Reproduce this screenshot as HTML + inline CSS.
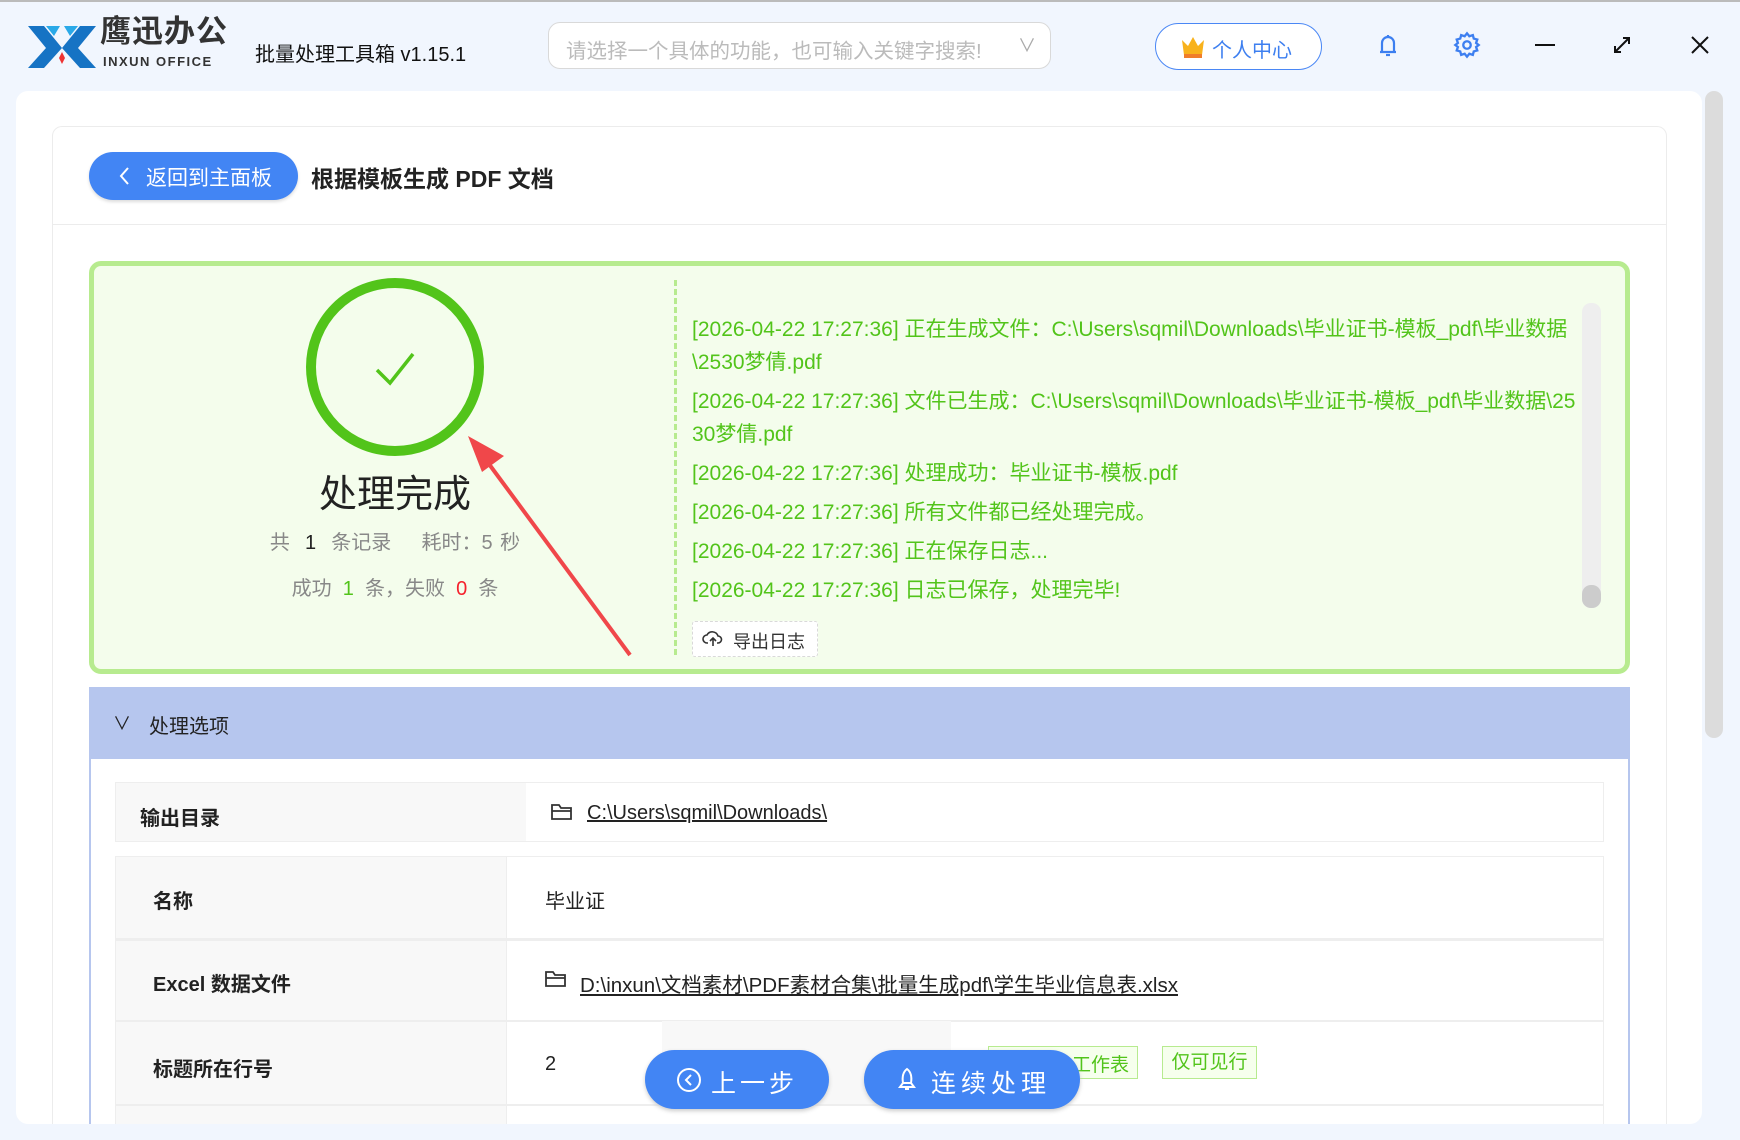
<!DOCTYPE html>
<html><head><meta charset="utf-8"><style>
*{box-sizing:border-box;margin:0;padding:0}
body{width:1740px;height:1140px;background:#f1f6fe;font-family:"Liberation Sans","Noto Sans CJK SC",sans-serif;position:relative;overflow:hidden;color:#222}
.a{position:absolute}
.log{position:absolute;left:692px;color:#52c41a;font-size:21px;white-space:nowrap}
.lab{position:absolute;font-weight:bold;font-size:20px;color:#222}
</style></head><body>
<div class="a" style="left:0;top:0;width:1740px;height:2px;background:#bbb"></div>
<svg class="a" style="left:28px;top:22px" width="68" height="46" viewBox="0 0 68 46">
<path d="M0 4h16l18 22-18 20H0l18-20z" fill="#1673c4"/>
<path d="M68 4H52L34 26l18 20h16L50 26z" fill="#1673c4"/>
<path d="M18 4h14l-6 10z" fill="#2aa9e8"/><path d="M50 4H36l6 10z" fill="#2aa9e8"/>
<path d="M34 30l3 6-3 6-3-6z" fill="#e33"/>
</svg>
<div class="a" style="left:100px;top:14px;font-size:31px;line-height:36px;font-weight:bold;color:#333;letter-spacing:1px">鹰迅办公</div>
<div class="a" style="left:103px;top:55px;font-size:13px;line-height:14px;font-weight:bold;color:#333;letter-spacing:1.5px">INXUN OFFICE</div>
<div class="a" style="left:255px;top:38px;font-size:20px;color:#111">批量处理工具箱 v1.15.1</div>
<div class="a" style="left:548px;top:22px;width:503px;height:47px;border:1px solid #d9d9d9;border-radius:12px;background:#fff"></div>
<div class="a" style="left:566px;top:34px;font-size:20.5px;color:#bbb">请选择一个具体的功能，也可输入关键字搜索!</div>
<div class="a" style="left:1018px;top:32px;font-size:18px;color:#aaa">∨</div>
<div class="a" style="left:1155px;top:23px;width:167px;height:47px;border:1px solid #4a87f5;border-radius:24px;background:#fff"></div>
<svg class="a" style="left:1180px;top:34px" width="26" height="26" viewBox="0 0 26 26"><path d="M2 6l6 6 5-9 5 9 6-6-2 15H4z" fill="#f8b21c"/><rect x="4" y="20" width="18" height="4" fill="#f07d2a"/></svg>
<div class="a" style="left:1212px;top:34px;font-size:20px;color:#3d7ff0">个人中心</div>
<svg class="a" style="left:1376px;top:32px" width="24" height="28" viewBox="0 0 24 28" fill="none" stroke="#3d7ff0" stroke-width="2.2"><path d="M12 3v2M6 20V11a6 6 0 0 1 12 0v9H4h16"/><path d="M10 23h4"/></svg>
<svg class="a" style="left:1453px;top:31px" width="28" height="28" viewBox="0 0 24 24" fill="none" stroke="#3d7ff0" stroke-width="2"><circle cx="12" cy="12" r="3.2"/><path d="M12 2l2 2.5 3-1 .8 3 3 .8-1 3L22 12l-2.2 1.7 1 3-3 .8-.8 3-3-1L12 22l-2-2.5-3 1-.8-3-3-.8 1-3L2 12l2.2-1.7-1-3 3-.8.8-3 3 1z"/></svg>
<div class="a" style="left:1535px;top:44px;width:20px;height:2px;background:#111"></div>
<svg class="a" style="left:1612px;top:35px" width="20" height="20" viewBox="0 0 20 20" stroke="#111" stroke-width="2" fill="none"><path d="M3 17L17 3M11 3h6v6M3 11v6h6"/></svg>
<svg class="a" style="left:1690px;top:35px" width="20" height="20" viewBox="0 0 20 20" stroke="#111" stroke-width="2"><path d="M2 2l16 16M18 2L2 18"/></svg>
<div class="a" style="left:16px;top:91px;width:1686px;height:1033px;background:#fff;border-radius:12px"></div>
<div class="a" style="left:1705px;top:91px;width:18px;height:647px;background:#dcdcdc;border-radius:9px"></div>
<div class="a" style="left:52px;top:126px;width:1615px;height:1000px;border:1px solid #ececec;border-bottom:none;border-radius:10px 10px 0 0"></div>
<div class="a" style="left:53px;top:224px;width:1613px;height:1px;background:#ececec"></div>
<div class="a" style="left:89px;top:152px;width:209px;height:48px;background:#4285f4;border-radius:24px;box-shadow:0 2px 3px #ddd"></div>
<svg class="a" style="left:118px;top:166px" width="12" height="20" viewBox="0 0 12 20" fill="none" stroke="#fff" stroke-width="2"><path d="M10 2L3 10l7 8"/></svg>
<div class="a" style="left:146px;top:162px;font-size:21px;color:#fff">返回到主面板</div>
<div class="a" style="left:311px;top:160px;font-size:23px;font-weight:bold;color:#222">根据模板生成 PDF 文档</div>
<div class="a" style="left:89px;top:261px;width:1541px;height:413px;border:5px solid #b7eb8f;background:#f4fdec;border-radius:12px"></div>
<div class="a" style="left:306px;top:278px;width:178px;height:178px;border:10px solid #52c41a;border-radius:50%"></div>
<svg class="a" style="left:375px;top:352px" width="40" height="34" viewBox="0 0 40 34" fill="none" stroke="#52c41a" stroke-width="3.5"><path d="M2 18l13 13L38 2"/></svg>
<div class="a" style="left:295px;top:463px;width:200px;text-align:center;font-size:38px;color:#222">处理完成</div>
<div class="a" style="left:230px;top:526px;width:330px;text-align:center;font-size:20px;color:#888;word-spacing:2px">共&nbsp; <span style="color:#222">1</span>&nbsp; 条记录 &nbsp;&nbsp; 耗时：5 秒</div>
<div class="a" style="left:230px;top:572px;width:330px;text-align:center;font-size:20px;color:#888">成功&nbsp; <span style="color:#52c41a">1</span>&nbsp; 条，失败&nbsp; <span style="color:#f5222d">0</span>&nbsp; 条</div>
<div class="a" style="left:674px;top:280px;height:375px;border-left:3px dashed #b7eb8f"></div>
<div class="log" style="top:313px">[2026-04-22 17:27:36] 正在生成文件：C:\Users\sqmil\Downloads\毕业证书-模板_pdf\毕业数据</div>
<div class="log" style="top:346px">\2530梦倩.pdf</div>
<div class="log" style="top:385px">[2026-04-22 17:27:36] 文件已生成：C:\Users\sqmil\Downloads\毕业证书-模板_pdf\毕业数据\25</div>
<div class="log" style="top:418px">30梦倩.pdf</div>
<div class="log" style="top:457px">[2026-04-22 17:27:36] 处理成功：毕业证书-模板.pdf</div>
<div class="log" style="top:496px">[2026-04-22 17:27:36] 所有文件都已经处理完成。</div>
<div class="log" style="top:535px">[2026-04-22 17:27:36] 正在保存日志...</div>
<div class="log" style="top:574px">[2026-04-22 17:27:36] 日志已保存，处理完毕!</div>
<div class="a" style="left:1582px;top:303px;width:19px;height:305px;background:#eee;border-radius:9px"></div>
<div class="a" style="left:1582px;top:585px;width:19px;height:23px;background:#ccc;border-radius:9px"></div>
<div class="a" style="left:692px;top:621px;width:126px;height:36px;border:1px dashed #d9d9d9;background:#fff;border-radius:3px"></div>
<svg class="a" style="left:702px;top:630px" width="22" height="18" viewBox="0 0 22 18" fill="none" stroke="#333" stroke-width="1.6"><path d="M6 13H5a4 4 0 0 1 0-8 6 6 0 0 1 11 1 3.5 3.5 0 0 1 0 7h-1M11 16V8M8 11l3-3 3 3"/></svg>
<div class="a" style="left:733px;top:628px;font-size:18px;color:#333">导出日志</div>
<svg class="a" style="left:0;top:0" width="1740" height="1140"><line x1="630" y1="655" x2="486" y2="460" stroke="#f0474a" stroke-width="4"/><path d="M468 436l36 20-22 16z" fill="#f0474a"/></svg>
<div class="a" style="left:89px;top:687px;width:1541px;height:440px;border:2px solid #b6c6ee;border-top:none"></div>
<div class="a" style="left:89px;top:687px;width:1541px;height:72px;background:#b6c6ee"></div>
<div class="a" style="left:113px;top:710px;font-size:18px;color:#222">∨</div>
<div class="a" style="left:149px;top:710px;font-size:20px;color:#222">处理选项</div>
<div class="a" style="left:115px;top:782px;width:1489px;height:60px;border:1px solid #eee"></div>
<div class="a" style="left:116px;top:783px;width:410px;height:58px;background:#f8f8f8"></div>
<div class="lab" style="left:140px;top:802px">输出目录</div>
<svg class="a" style="left:550px;top:802px" width="24" height="20" viewBox="0 0 24 20" fill="none" stroke="#333" stroke-width="1.8"><path d="M2 3h7l2 3h10v11H2zM2 9h19"/></svg>
<div class="a" style="left:587px;top:802px;font-size:20px;color:#222;text-decoration:underline">C:\Users\sqmil\Downloads\</div>
<div class="a" style="left:115px;top:856px;width:1489px;height:280px;border:1px solid #eee"></div>
<div class="a" style="left:116px;top:857px;width:391px;height:280px;background:#f8f8f8;border-right:1px solid #eee"></div>
<div class="a" style="left:116px;top:938px;width:1488px;height:3px;background:#eee"></div>
<div class="a" style="left:116px;top:1020px;width:1488px;height:2px;background:#eee"></div>
<div class="a" style="left:116px;top:1104px;width:1488px;height:2px;background:#eee"></div>
<div class="a" style="left:662px;top:1021px;width:289px;height:83px;background:#f8f8f8"></div>
<div class="lab" style="left:153px;top:885px">名称</div>
<div class="a" style="left:545px;top:885px;font-size:20px">毕业证</div>
<div class="lab" style="left:153px;top:968px">Excel 数据文件</div>
<svg class="a" style="left:544px;top:969px" width="24" height="20" viewBox="0 0 24 20" fill="none" stroke="#333" stroke-width="1.8"><path d="M2 3h7l2 3h10v11H2zM2 9h19"/></svg>
<div class="a" style="left:580px;top:968px;font-size:20.5px;text-decoration:underline">D:\inxun\文档素材\PDF素材合集\批量生成pdf\学生毕业信息表.xlsx</div>
<div class="lab" style="left:153px;top:1053px">标题所在行号</div>
<div class="a" style="left:545px;top:1053px;font-size:20px">2</div>
<div class="a" style="left:988px;top:1046px;width:150px;height:33px;border:1px solid #b7eb8f;background:#f6ffed"></div>
<div class="a" style="left:1072px;top:1050px;font-size:19px;color:#52c41a">工作表</div>
<div class="a" style="left:1162px;top:1046px;width:95px;height:33px;border:1px solid #b7eb8f;background:#f6ffed;font-size:19px;color:#52c41a;text-align:center;line-height:31px">仅可见行</div>
<div class="a" style="left:645px;top:1050px;width:184px;height:59px;background:#4285f4;border-radius:30px;box-shadow:0 2px 4px #ccc"></div>
<svg class="a" style="left:676px;top:1067px" width="26" height="26" viewBox="0 0 26 26" fill="none" stroke="#fff" stroke-width="2"><circle cx="13" cy="13" r="11"/><path d="M15 8l-5 5 5 5"/></svg>
<div class="a" style="left:711px;top:1064px;font-size:25px;color:#fff;letter-spacing:4px">上一步</div>
<div class="a" style="left:864px;top:1050px;width:216px;height:59px;background:#4285f4;border-radius:30px;box-shadow:0 2px 4px #ccc"></div>
<svg class="a" style="left:896px;top:1067px" width="22" height="26" viewBox="0 0 22 26" fill="none" stroke="#fff" stroke-width="2"><path d="M11 2c4 3 5 8 4 14H7C6 10 7 5 11 2zM7 16l-3 4h14l-3-4M9 22h4"/></svg>
<div class="a" style="left:931px;top:1064px;font-size:25px;color:#fff;letter-spacing:5px">连续处理</div>
<div class="a" style="left:0;top:1124px;width:1740px;height:16px;background:#f1f6fe"></div>
</body></html>
